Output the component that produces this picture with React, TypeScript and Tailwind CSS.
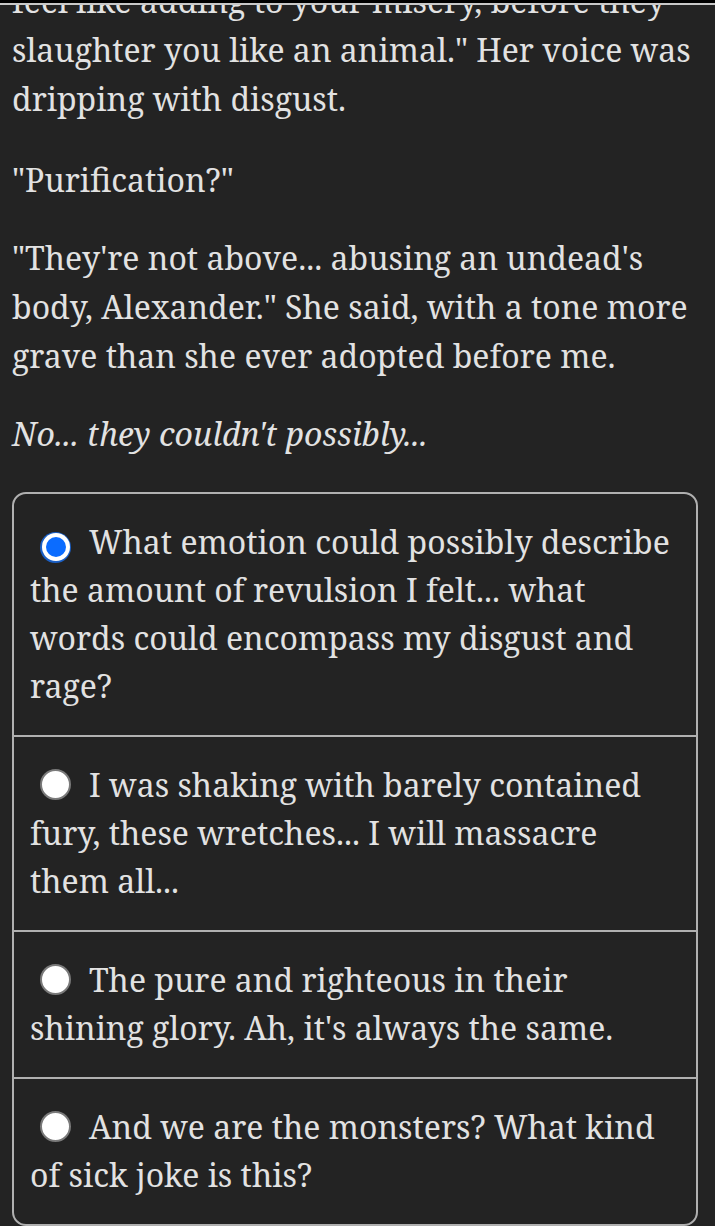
function Radio({ checked }: { checked?: boolean }) {
  if (checked) {
    return (
      <span className="relative top-[1px] mr-[18px] ml-[10px] inline-flex h-[31px] w-[31px] items-center justify-center rounded-full bg-[#1b5fc4] align-[-2px]">
        <span className="flex h-[28px] w-[28px] items-center justify-center rounded-full bg-white">
          <span className="h-[20px] w-[20px] rounded-full bg-[#0b6cff]" />
        </span>
      </span>
    );
  }
  return (
    <span className="relative top-[1px] mr-[18px] ml-[10px] inline-block h-[31px] w-[31px] rounded-full border-[2px] border-[#7a7a7a] bg-white align-[-2px]" />
  );
}

const options = [
  { text: "What emotion could possibly describe the amount of revulsion I felt... what words could encompass my disgust and rage?", checked: true },
  { text: "I was shaking with barely contained fury, these wretches... I will massacre them all..." },
  { text: "The pure and righteous in their shining glory. Ah, it's always the same." },
  { text: "And we are the monsters? What kind of sick joke is this?" },
];

export default function App() {
  return (
    <div
      className="relative h-[1226px] overflow-hidden bg-[#232323] text-[#e2e2e2]"
      style={{ fontFamily: "'Noto Serif', 'DejaVu Serif', serif" }}
    >
      <div className="absolute inset-x-0 top-0 z-10 h-[5px] border-b-[2px] border-[#c8c8c8] bg-black" />
      <div className="mt-[-24px] w-[702px] pl-[12px] text-[32px] leading-[49px]">
        <p className="mb-[32px]">
          feel like adding to your misery, before they slaughter you like an animal." Her voice was dripping with disgust.
        </p>
        <p className="mb-[29px]">"Purification?"</p>
        <p className="mb-[29px]">
          "They're not above... abusing an undead's body, Alexander." She said, with a tone more grave than she ever adopted before me.
        </p>
        <p className="mb-[34px] italic">No... they couldn't possibly...</p>
      </div>
      <div className="ml-[12px] w-[686px] overflow-hidden rounded-[14px] border-[2px] border-[#b0b0b0] text-[32px] leading-[48px]">
        {options.map((o, i) => (
          <div
            key={i}
            className={`pl-[16px] pr-[24px] pt-[24px] ${i === options.length - 1 ? "pb-[25px]" : "pb-[25px]"} ${i > 0 ? "border-t-[2px] border-[#b0b0b0]" : ""}`}
          >
            <Radio checked={o.checked} />
            {o.text}
          </div>
        ))}
      </div>
    </div>
  );
}
